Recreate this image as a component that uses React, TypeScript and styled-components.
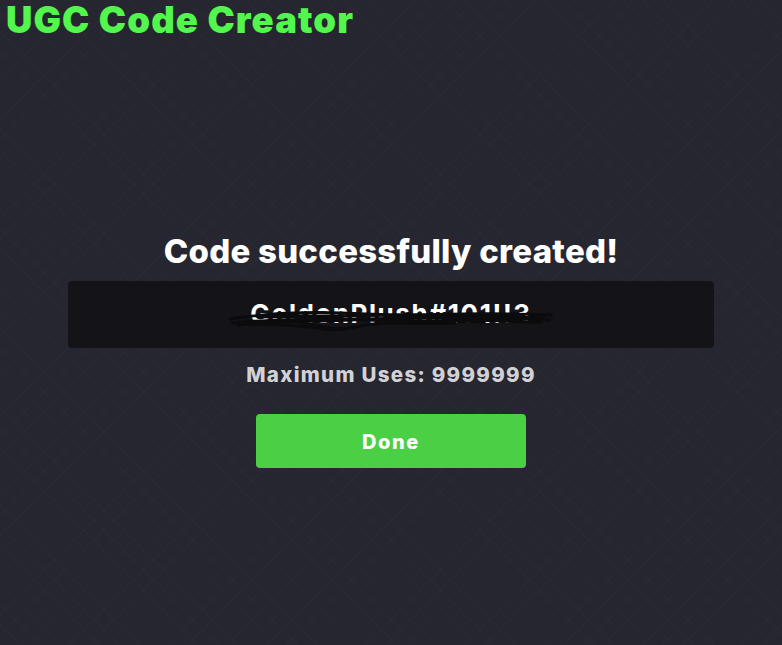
import React from 'react';
import styled, { createGlobalStyle } from 'styled-components';

const green = '#52f64c';
const buttonGreen = '#4bcf45';

const GlobalStyle = createGlobalStyle`
  html, body {
    margin: 0;
    padding: 0;
    height: 100%;
  }
  body {
    background-color: #262630;
    font-family: Inter, "Noto Sans", sans-serif;
  }
`;
// whole page with the faint diamond texture
const Page = styled.div`
  min-height: 645px;
  box-sizing: border-box;
  padding: 0 6px;
  background-color: #262630;
  background-image: repeating-linear-gradient(45deg, rgba(255, 255, 255, 0.013) 0 1px, transparent 1px 14px),
    repeating-linear-gradient(-45deg, rgba(255, 255, 255, 0.013) 0 1px, transparent 1px 14px);
`;
// app name in top left corner
const AppTitle = styled.h1`
  margin: 0;
  font-size: 36.5px;
  line-height: 1.15;
  font-weight: 900;
  letter-spacing: 1.1px;
  color: ${green};
`;
// centered result column
const Result = styled.div`
  display: flex;
  flex-direction: column;
  align-items: center;
  margin-top: 193px;
`;
const Heading = styled.h2`
  margin: 0 0 13px;
  font-size: 33px;
  line-height: 1;
  font-weight: 800;
  letter-spacing: 0.25px;
  color: #ffffff;
`;
// dark box holding the generated code
const CodeBox = styled.div`
  box-sizing: border-box;
  width: 646px;
  height: 67px;
  display: flex;
  align-items: center;
  justify-content: center;
  background: #131318;
  border-radius: 4px;
`;
const CodeText = styled.span`
  position: relative;
  font-size: 26px;
  line-height: 1;
  font-weight: 700;
  letter-spacing: 1.6px;
  color: #ffffff;
`;
// marker scribble hiding the code
const Scribble = styled.svg`
  position: absolute;
  left: -22px;
  top: 4px;
  width: calc(100% + 44px);
  height: 30px;
  pointer-events: none;
`;
const Uses = styled.p`
  margin: 17px 0 0;
  font-size: 20.5px;
  line-height: 1;
  font-weight: 800;
  letter-spacing: 1.3px;
  color: #d2d2d6;
`;
const DoneButton = styled.button`
  margin-top: 29px;
  width: 270px;
  height: 54px;
  padding: 2px 0 0;
  border: none;
  border-radius: 4px;
  background: ${buttonGreen};
  color: #ffffff;
  font-family: inherit;
  font-size: 20px;
  line-height: 1;
  font-weight: 800;
  letter-spacing: 1.6px;
  cursor: pointer;
`;

export default function App(): JSX.Element {
  return (
    <>
      <GlobalStyle />
      <Page>
        <AppTitle>UGC Code Creator</AppTitle>
        <Result>
          <Heading>Code successfully created!</Heading>
          <CodeBox>
            <CodeText>
              GoldenPlush#101!!3
              <Scribble viewBox="0 0 330 30" preserveAspectRatio="none">
                <path
                  d="M2 14 C40 8 90 6 140 9 C190 12 240 6 328 10 M4 18 C60 12 120 16 170 13 C220 10 270 14 320 12 M10 20 C40 17 70 21 90 23 C100 25 110 26 118 24 C150 16 200 15 260 17 M30 12 C80 10 150 18 210 16 C250 14 290 13 326 15 M20 16 C90 20 160 10 240 14 C280 16 300 18 318 17 M40 10 C100 13 180 8 300 11 M60 15 C90 20 110 27 130 22 C160 14 190 21 230 18"
                  fill="none"
                  stroke="#0b0b0d"
                  strokeWidth="2.8"
                  strokeLinecap="round"
                />
              </Scribble>
            </CodeText>
          </CodeBox>
          <Uses>Maximum Uses: 9999999</Uses>
          <DoneButton>Done</DoneButton>
        </Result>
      </Page>
    </>
  );
}
